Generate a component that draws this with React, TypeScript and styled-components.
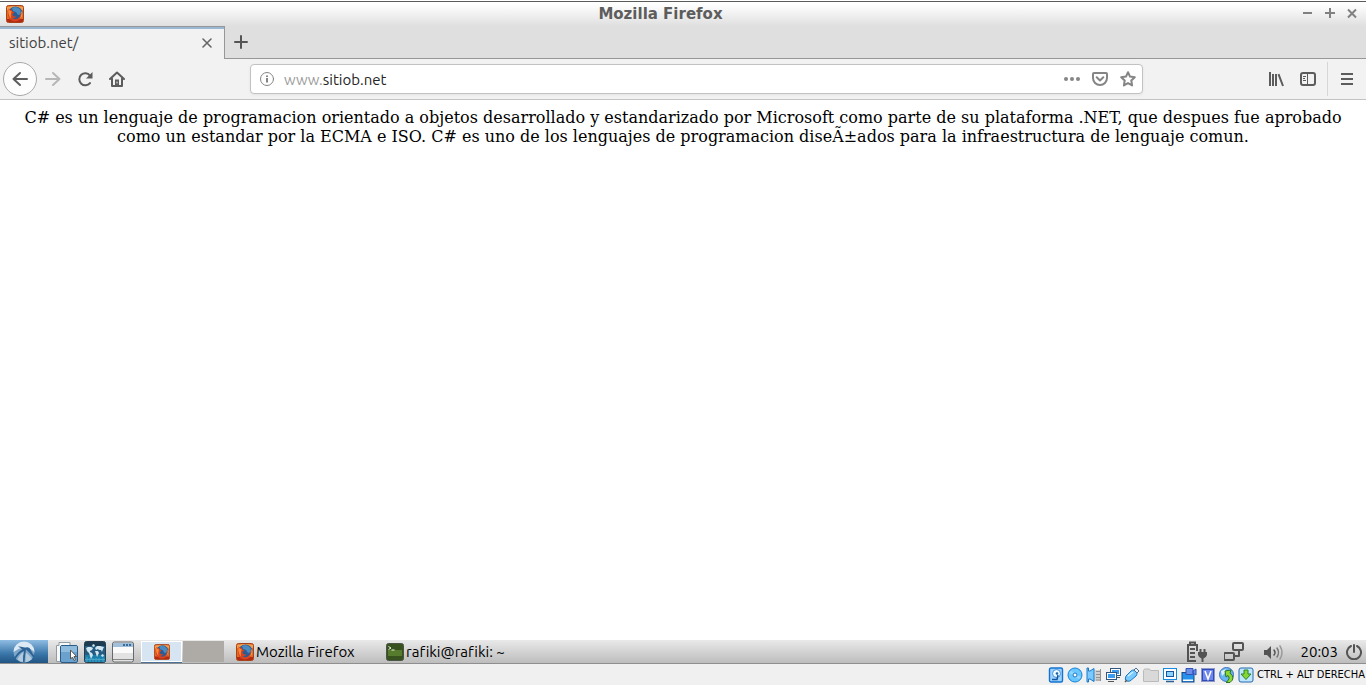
import React, { useState } from "react";
import styled, { createGlobalStyle } from "styled-components";

const GlobalStyle = createGlobalStyle`
  * { box-sizing: border-box; }
  body { margin: 0; background: #fff; }
  button { border: 0; padding: 0; background: none; color: inherit; font: inherit; }
  svg { display: block; flex: none; }
`;

const uiFont = `"Ubuntu", "Noto Sans", sans-serif`;

const Desktop = styled.div`
  min-height: 100vh;
  display: flex;
  flex-direction: column;
  font-family: ${uiFont};
  font-variant-ligatures: none;
`;

const TitleBar = styled.header`
  height: 26px;
  display: flex;
  align-items: center;
  padding: 1px 3px 0 6px;
  border-top: 1px solid #fff;
  background: linear-gradient(#5a5a5a 1px, #fff 1px, #fbfbfb 6px, #dfdfdf);
  color: #808080;
`;

const Title = styled.h1`
  flex: 1;
  margin: 0;
  text-align: center;
  font: bold 15px/20px "DejaVu Sans", sans-serif;
  color: #5d5d5d;
`;

const IconButton = styled.button<{ $width?: number }>`
  width: ${(p) => p.$width ?? 32}px;
  height: 24px;
  flex: none;
  display: flex;
  align-items: center;
  justify-content: center;
`;

const TabStrip = styled.nav`
  height: 33px;
  display: flex;
  background: #dfdfdf;
`;

const Tab = styled.div`
  width: 225px;
  display: flex;
  align-items: center;
  padding: 0 5px 1px 9px;
  border-top: 1px solid #979797;
  border-right: 1px solid #979797;
  box-shadow: inset 0 2px #99b8d4;
  background: #f2f2f2;
  color: #3f3f3f;
  font-size: 15px;
  line-height: 20px;
`;

const TabName = styled.span`
  flex: 1;
`;

const StripRest = styled.div`
  flex: 1;
  display: flex;
  align-items: center;
  border-bottom: 1px solid #979797;
  color: #555;
`;

const Toolbar = styled.div`
  height: 41px;
  display: flex;
  align-items: center;
  padding: 0 3px;
  border-bottom: 1px solid #c3c3c3;
  background: #f2f2f2;
  color: #5c5c5c;
`;

const BackButton = styled(IconButton)`
  height: 34px;
  border: 1px solid #a9a9a9;
  border-radius: 50%;
  background: #fdfdfd;
`;

const Spacer = styled.div`
  flex: 1;
`;

const Address = styled.label`
  width: 893px;
  flex: 0 1 auto;
  height: 30px;
  display: flex;
  align-items: center;
  padding-left: 8px;
  border: 1px solid #c2c2c2;
  border-radius: 4px;
  box-shadow: 0 1px 3px #00000010;
  background: #fff;
  color: #858585;
  font-size: 15px;
`;

const Prefix = styled.span`
  margin-left: 9px;
  color: #9b9b9b;
`;

const AddressInput = styled.input`
  flex: 1;
  min-width: 0;
  padding: 0;
  border: 0;
  outline: 0;
  background: none;
  color: #252525;
  font: inherit;
`;

const Divider = styled.div`
  width: 1px;
  height: 34px;
  margin: 0 3px;
  background: #d6d6d6;
`;

const Page = styled.main`
  flex: 1;
  padding: 8px;
  background: #fff;
  color: #000;
  font: 16px/19px "DejaVu Serif", serif;
  text-align: center;
`;

const Paragraph = styled.p`
  margin: 0;
`;

const Panel = styled.footer`
  height: 24px;
  display: flex;
  align-items: center;
  border-bottom: 1px solid #8e8e8e;
  background: linear-gradient(#e9e9e9, #bdbdbd);
  color: #000;
  font-size: 15px;
  line-height: 22px;
`;

const StartButton = styled.button`
  width: 48px;
  height: 23px;
  display: flex;
  justify-content: center;
  align-items: center;
  background: linear-gradient(#8fbde3, #3a76a9 60%, #205583);
`;

const Launchers = styled.div`
  display: flex;
  gap: 6px;
  padding: 0 7px 0 8px;
`;

const Workspace = styled.button<{ $active?: boolean }>`
  width: 41px;
  height: 21px;
  margin-right: 1px;
  display: flex;
  justify-content: center;
  align-items: center;
  background: ${(p) => (p.$active ? "#d7e4f1" : "#aeaaa5")};
  box-shadow: ${(p) => (p.$active ? "inset 0 0 0 1px #fff, 0 1px #4b7298" : "none")};
`;

const Task = styled.button`
  width: 150px;
  display: flex;
  align-items: center;
  gap: 2px;
  padding-left: 11px;
  white-space: nowrap;
`;

const Tray = styled.div`
  margin-left: auto;
  display: flex;
  align-items: center;
  gap: 16px;
  padding-right: 4px;
  color: #535353;
`;

const Clock = styled.time`
  color: #000;
  margin-right: -8px;
`;

const HostBar = styled.footer`
  height: 21px;
  display: flex;
  align-items: center;
  justify-content: flex-end;
  gap: 3px;
  padding: 1px 1px 0 0;
  background: #f0f0f0;
  color: #000;
  font: 11px/16px "DejaVu Sans Condensed", "DejaVu Sans", sans-serif;
  white-space: nowrap;
`;

type LineProps = { size?: number; width?: number; children: React.ReactNode };

const Line = ({ size = 16, width = 2, children }: LineProps) => (
  <svg width={size} height={size} viewBox={`0 0 ${size} ${size}`} fill="none" stroke="currentColor" strokeWidth={width} strokeLinecap="round" strokeLinejoin="round">
    {children}
  </svg>
);

const Firefox = ({ size = 18 }: { size?: number }) => (
  <svg width={size} height={size} viewBox="0 0 18 18">
    <rect x=".5" y=".5" width="17" height="17" rx="2" fill="#e46a22" stroke="#a8421a" />
    <path d="M1 2q8-2 16 0v3H1z" fill="#f0a050" />
    <path d="M1 14h16v2q0 1-1 1H2q-1 0-1-1z" fill="#b32a10" />
    <circle cx="9.500" cy="8.500" r="7" fill="#2a5c96" />
    <path d="M6 3q5-3 8.500 2l.5 4-3 1-2-3-3-1z" fill="#4a8cc2" />
    <path d="M2.500 3.500q1.500 1.500 3 1l1 2 2 1-2 1.500q0 3 4 2.500-2 2.500-4.500 1.500 4 3 7.500-1 1.500-3 .5-5.500 3 4 0 8-5 3.500-9.500.500-4-4-2-11.500z" fill="#d9431f" />
    <path d="M2.500 4q-1 6 2.500 9.500-.5-3 0-4.500 0-2 1-2.500Q4 6 2.500 4z" fill="#f98a34" />
    <path d="M15 6q1.500 4-1.500 8 3-2 3-5.500 0-1.500-1.500-2.500z" fill="#f0b04a" />
  </svg>
);

const FileManager = () => (
  <svg width="22" height="22" viewBox="0 0 22 22">
    <path d="M.5 4.500h2.500V1.500h11v3h3v16H.5z" fill="#f8f8f8" stroke="#919ba2" />
    <rect x="4.500" y="4.500" width="17" height="17" rx="1.500" fill="#6ba2cd" stroke="#285b87" />
    <path d="M5 5h16v6H5z" fill="#8fbbdc" />
    <path d="M14.500 9v9l2-2 1.500 3.500 1.500-.7-1.500-3.300h2.500z" fill="#fff" stroke="#555" />
  </svg>
);

const Globe = () => (
  <svg width="22" height="22" viewBox="0 0 22 22">
    <rect x=".5" y=".5" width="21" height="21" rx="2" fill="#255b80" stroke="#273d4c" />
    <path d="M1 1h20v4H1z" fill="#1c3a50" />
    <path d="M1 14h20v7H1z" fill="#1b7fab" />
    <path d="M2 7l2-1 3 0 2 1-1 2-2 1 0 1 2 1 1 2-2 4-1-3-1-3-2-2zM8 4l2-1 1 2-2 1zM11 7l2-2 3 0 4 1-1 2-1 3-1-2-2 0-1-1-2 1zM11 10l3 0 1 2-2 4-1-3zM17 14l2-1 1 2-2 1z" fill="#cfe6f1" />
    <path d="M3 16v5M6 17v4M9 17v4M12 17v4M15 17v4M19 17v4M1 18.500h20" stroke="#63bedd" opacity=".6" />
  </svg>
);

const WindowIcon = () => (
  <svg width="22" height="22" viewBox="0 0 22 22">
    <rect x=".5" y="1" width="21" height="20" rx="2" fill="#e2e2e2" stroke="#65696d" />
    <path d="M1 3q0-1 1-1h18q1 0 1 1v3H1z" fill="#9fbfda" />
    <path d="M11 3h2v2h-2zM14 3h2v2h-2zM17 3h2v2h-2z" fill="#376b9b" />
    <path d="M1 6h20v6H1z" fill="#fafafa" />
    <path d="M1 18.500h20" stroke="#888" />
  </svg>
);

const Lubuntu = () => (
  <svg width="22" height="22" viewBox="0 0 22 22">
    <circle cx="11" cy="11" r="10.500" fill="#7da6c8" />
    <path d="M.5 11a10.500 10.500 0 0 1 21 0l-4-3-6-2-6 2z" fill="#dbe9f5" />
    <path d="M5 5.500q4-.5 7 1.500 2-1.500 4.500 0 2.500 5 5 8l-1 2q-4-6-7.500-8.500-1 5-1.500 12.500h-1.500q0-7 1-11-5 2-8.500 8l-1-1.500Q5 10.500 9.500 8.500 8 7 5 5.500z" fill="#2c6294" />
    <path d="M4.500 18.500Q7 13 10.500 11q-1 4-.5 10-3-.5-5.500-2.500zM13 11.500q3 2 6 6.500-3 3-6.500 3.300 0-5 .5-9.800z" fill="#b3cbdf" />
  </svg>
);

const Terminal = () => (
  <svg width="18" height="18" viewBox="0 0 18 18">
    <rect x=".5" y=".5" width="17" height="17" rx="2" fill="#38521f" stroke="#4b5545" />
    <path d="M2 7h14v6H2z" fill="#51762b" />
    <path d="M2 8h14M2 10h14M2 12h14" stroke="#6b8d36" opacity=".5" />
    <path d="M2.500 3.500L5 5 2.500 6.500M5.500 7h3" stroke="#eef5e7" fill="none" />
  </svg>
);

const hostIcons: [string, React.ReactNode][] = [
  ["Discos duros", <><rect x="1.500" y="1" width="13" height="14" rx="1.500" fill="#9fd3ff" stroke="#1272d0" strokeWidth="1.400" /><circle cx="8.500" cy="6.500" r="4" fill="#f2faff" stroke="#3d93e0" /><path d="M4 12.500h5L10 8" fill="none" stroke="#12569d" strokeWidth="1.500" /><circle cx="9" cy="6.500" r="1.300" fill="#1462b0" /></>],
  ["Unidades ópticas", <><circle cx="8" cy="8" r="7" fill="#6ac6ff" stroke="#1583d8" /><path d="M3 5l4 2M9 9l4 2" stroke="#8fd6ff" strokeWidth="3" /><circle cx="8" cy="8" r="2" fill="#fff" stroke="#1975c4" /></>],
  ["Audio", <><path d="M9 3h6v11H8z" fill="#d0d0d0" /><path d="M14.500 2v12M10 4.500h4M10 7.500h4M10 10.500h4M10 13h4" stroke="#919191" /><path d="M1 1h1.500v3H4l4-2.500v13L4 12H2.500v3H1z" fill="#7cc9ff" stroke="#1479cd" /></>],
  ["Red", <><rect x="5.500" y="1.500" width="10" height="7" fill="#fff" stroke="#31557e" /><path d="M7 3h7v4H7z" fill="#399cf1" /><path d="M12 10.500h3M3 14.500h6" stroke="#555" /><rect x="1.500" y="5.500" width="10" height="7" fill="#fff" stroke="#31557e" /><path d="M3 7h7v4H3z" fill="#399cf1" /></>],
  ["USB", <><path d="M2 9l5-5q1-1 3-1l3 3q0 2-1 3l-6 5q-3 1-4.500-1Q1 11 2 9z" fill="#79cbff" stroke="#1c78c4" /><path d="M10 3l2-2 3 3-2 2z" fill="#e6f3fc" stroke="#536f87" /><path d="M4 9l5-4" stroke="#d1efff" strokeWidth="1.500" /><path d="M3 13l-2 2" stroke="#555" strokeWidth="1.500" /></>],
  ["Carpetas compartidas", <path d="M.5 14.500V3.500l1-1.500h5l1 1.500h8v11z" fill="#d9d9d9" stroke="#bababa" />],
  ["Pantalla", <><rect x="1.500" y="1.500" width="13" height="11" fill="#fff" stroke="#1689e4" /><rect x="4.500" y="4.500" width="7" height="5" fill="#8bd2ff" stroke="#17569d" /><path d="M4 14.500h8" stroke="#286098" strokeWidth="1.500" /></>],
  ["Grabación", <><rect x="1" y="5.500" width="12" height="9.500" fill="#2691ed" stroke="#174a85" /><path d="M2 12.500h10V14H2z" fill="#fff" /><path d="M5 1.500h7v6H5zM12 4l3-2v6l-3-2z" fill="#6d8fe8" stroke="#3151b8" /></>],
  ["Virtualización", <><rect x="1.500" y="1.500" width="13" height="13" fill="none" stroke="#2940a0" strokeDasharray="1 1" /><rect x="2.500" y="2.500" width="11" height="11" fill="#6f86ea" stroke="#3049b8" /><path d="M5 4l3 8 3-8" fill="none" stroke="#fff" strokeWidth="1.500" /></>],
  ["Ratón", <><circle cx="7.500" cy="7.500" r="7" fill="#69b5f2" stroke="#4470bd" /><path d="M2 4l5-2-1 4-3 3z" fill="#daf0fd" /><path d="M6 4l6-1-1 3q6 5 0 9.500H7q5-4 2-7L7 10z" fill="#8bd932" stroke="#28742b" /></>],
  ["Teclado", <><rect x="1" y="1" width="14" height="14" rx="2" fill="#bfe6ff" stroke="#2468ac" /><path d="M6 3h4v4h3l-5 5.500L3 7h3z" fill="#87d533" stroke="#27842e" /></>],
];

export default function App() {
  const [host, setHost] = useState("sitiob.net");
  return (
    <>
      <GlobalStyle />
      <Desktop>
        <TitleBar>
          <Firefox />
          <Title>Mozilla Firefox</Title>
          <IconButton $width={22} aria-label="Minimizar"><Line><path d="M3 7h9" strokeLinecap="butt" /></Line></IconButton>
          <IconButton $width={22} aria-label="Maximizar"><Line><path d="M3 7h10M8 2v10" strokeLinecap="butt" /></Line></IconButton>
          <IconButton $width={22} aria-label="Cerrar"><Line><path d="M4 3.500l8 8M12 3.500l-8 8" strokeLinecap="butt" /></Line></IconButton>
        </TitleBar>
        <TabStrip>
          <Tab>
            <TabName>sitiob.net/</TabName>
            <IconButton $width={24} aria-label="Cerrar pestaña"><Line><path d="M4 4l8 8M12 4l-8 8" strokeWidth="1.600" stroke="#666" /></Line></IconButton>
          </Tab>
          <StripRest>
            <IconButton aria-label="Nueva pestaña"><Line><path d="M2 8h12M8 2v12" /></Line></IconButton>
          </StripRest>
        </TabStrip>
        <Toolbar>
          <BackButton $width={34} aria-label="Atrás"><Line><path d="M15 8H1.500M8 2L1.500 8 8 14" /></Line></BackButton>
          <IconButton disabled aria-label="Adelante"><Line><g stroke="#b7b7b7"><path d="M1 8h13.500M8 2l6.500 6L8 14" /></g></Line></IconButton>
          <IconButton aria-label="Recargar"><Line><path d="M13 12A6 6 0 1 1 13 4.500" /><path d="M15.500 1v6.500H9z" fill="currentColor" stroke="none" /></Line></IconButton>
          <IconButton aria-label="Inicio"><Line><path d="M1 8l7-6.500L15 8M3 7.500V15h10V7.500" /><path d="M6 15V8.500h4V15z" fill="currentColor" stroke="none" /><path d="M8 11v1" stroke="#f2f2f2" strokeWidth="1" /></Line></IconButton>
          <Spacer />
          <Address>
            <Line width={1}><circle cx="8" cy="8" r="6.500" /><path d="M8 7v4.500M8 4.500v1.500" strokeWidth="2" strokeLinecap="butt" /></Line>
            <Prefix>www.</Prefix>
            <AddressInput aria-label="Dirección" value={host} onChange={(e) => setHost(e.target.value)} />
            <IconButton $width={28} aria-label="Acciones de página"><svg width="16" height="16" viewBox="0 0 16 16" fill="currentColor"><circle cx="2" cy="8" r="2" /><circle cx="8" cy="8" r="2" /><circle cx="14" cy="8" r="2" /></svg></IconButton>
            <IconButton $width={28} aria-label="Guardar en Pocket"><Line><path d="M2 2h12q1 0 1 1v4a7 7 0 0 1-14 0V3q0-1 1-1z" /><path d="M4.700 6.300L8 9.500l3.300-3.200" /></Line></IconButton>
            <IconButton $width={28} aria-label="Marcador"><Line><path d="M8 1.200l2 4.400 4.800.6-3.500 3.300.8 4.900L8 12.100l-4.100 2.300.8-4.900L1.200 6.200 6 5.600z" /></Line></IconButton>
          </Address>
          <Spacer />
          <IconButton aria-label="Biblioteca"><Line><path d="M2 1v14M5 3v12M8 3v12M10.500 3.200L15 15" strokeLinecap="butt" /></Line></IconButton>
          <IconButton aria-label="Barra lateral"><Line><rect x="1" y="2" width="14" height="12" rx="2" /><path d="M7.500 2v12M3 5.500h3M3 7.500h2M3 9.500h3" strokeWidth="1" strokeLinecap="butt" /></Line></IconButton>
          <Divider />
          <IconButton aria-label="Menú"><Line><path d="M2 3h12M2 8h12M2 13h12" strokeLinecap="butt" /></Line></IconButton>
        </Toolbar>
        <Page>
          <Paragraph>
            C# es un lenguaje de programacion orientado a objetos desarrollado y estandarizado por Microsoft como parte de su plataforma .NET, que despues fue aprobado como un estandar por la ECMA e ISO. C# es uno de los lenguajes de programacion diseÃ±ados para la infraestructura de lenguaje comun.
          </Paragraph>
        </Page>
        <Panel>
          <StartButton aria-label="Menú de aplicaciones"><Lubuntu /></StartButton>
          <Launchers>
            <IconButton $width={22} aria-label="Archivos"><FileManager /></IconButton>
            <IconButton $width={22} aria-label="Navegador"><Globe /></IconButton>
            <IconButton $width={22} aria-label="Mostrar escritorio"><WindowIcon /></IconButton>
          </Launchers>
          <Workspace $active aria-label="Escritorio 1"><Firefox size={16} /></Workspace>
          <Workspace aria-label="Escritorio 2" />
          <Task><Firefox />Mozilla Firefox</Task>
          <Task><Terminal />rafiki@rafiki: ~</Task>
          <Tray>
            <Line size={22}><path d="M10 20H2V4h9v6M4 3V1.500h5V3M4 8h5M4 12h5M4 16h5" strokeLinecap="butt" strokeLinejoin="miter" /><path d="M12 11h9v3q-1 3-3.500 3.500V21h-2v-3.500Q13 17 12 14z" fill="currentColor" stroke="none" /><path d="M14.500 8v4M18.500 8v4" strokeLinecap="butt" /></Line>
            <Line size={22}><rect x="9" y="2" width="10" height="7" rx="1" /><rect x="-1" y="12" width="10" height="7" rx="1" transform="translate(1 0)" /><path d="M15 9v6h-4" strokeLinecap="butt" /></Line>
            <Line size={22} width={1}><path d="M2 9h3l4-4v13l-4-4H2z" fill="currentColor" stroke="none" /><path d="M12 9q2 2.500 0 5" strokeWidth="1.500" /><path d="M15 7q3 4.500 0 9" strokeWidth="1.500" stroke="#777" /><path d="M18 5q4 6.500 0 13" strokeWidth="1.500" stroke="#999" /></Line>
            <Clock>20:03</Clock>
            <IconButton $width={16} aria-label="Apagar"><Line><path d="M5 2a7 7 0 1 0 6 0M8 1v7" /></Line></IconButton>
          </Tray>
        </Panel>
        <HostBar>
          {hostIcons.map(([name, art]) => (
            <svg key={name} role="img" aria-label={name} width="16" height="16" viewBox="0 0 16 16">{art}</svg>
          ))}
          <span>CTRL + ALT DERECHA</span>
        </HostBar>
      </Desktop>
    </>
  );
}
